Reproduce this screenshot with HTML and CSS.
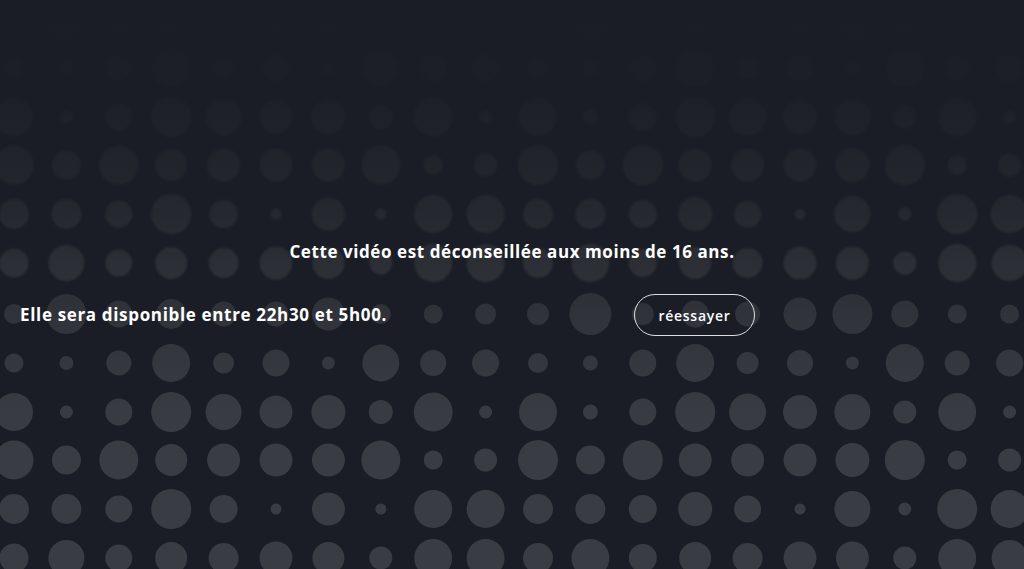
FILE: index.html
```html
<!DOCTYPE html>
<html lang="fr">
<head>
<meta charset="utf-8">
<title>Vidéo déconseillée</title>
<link rel="stylesheet" href="styles.css">
</head>
<body>
<div class="screen">
  <svg class="dots" width="1024" height="569" viewBox="0 0 1024 569" aria-hidden="true">
    <defs>
      <linearGradient id="fade" x1="0" y1="0" x2="0" y2="1">
        <stop offset="0" stop-color="#1a1d25" stop-opacity="1"/>
        <stop offset="0.035" stop-color="#1a1d25" stop-opacity="0.99"/>
        <stop offset="0.121" stop-color="#1a1d25" stop-opacity="0.95"/>
        <stop offset="0.204" stop-color="#1a1d25" stop-opacity="0.88"/>
        <stop offset="0.288" stop-color="#1a1d25" stop-opacity="0.78"/>
        <stop offset="0.374" stop-color="#1a1d25" stop-opacity="0.65"/>
        <stop offset="0.462" stop-color="#1a1d25" stop-opacity="0.46"/>
        <stop offset="0.55" stop-color="#1a1d25" stop-opacity="0.3"/>
        <stop offset="0.636" stop-color="#1a1d25" stop-opacity="0.15"/>
        <stop offset="0.722" stop-color="#1a1d25" stop-opacity="0.04"/>
        <stop offset="0.78" stop-color="#1a1d25" stop-opacity="0"/>
      </linearGradient>
      <filter id="soft" x="-5%" y="-10%" width="110%" height="120%">
        <feGaussianBlur stdDeviation="1.3"/>
      </filter>
      <g id="band">
        <circle cx="14" cy="19" r="10"/><circle cx="66.4" cy="19" r="20"/><circle cx="118.8" cy="19" r="13.5"/><circle cx="171.2" cy="19" r="15"/><circle cx="223.6" cy="19" r="12.5"/><circle cx="276" cy="19" r="12.5"/><circle cx="328.4" cy="19" r="16.5"/><circle cx="380.8" cy="19" r="10"/><circle cx="433.2" cy="19" r="9.5"/><circle cx="485.6" cy="19" r="10.5"/><circle cx="538" cy="19" r="11"/><circle cx="590.4" cy="19" r="21"/><circle cx="642.8" cy="19" r="11"/><circle cx="695.2" cy="19" r="13.5"/><circle cx="747.6" cy="19" r="12.5"/><circle cx="800" cy="19" r="16.5"/><circle cx="852.4" cy="19" r="20"/><circle cx="904.8" cy="19" r="13.5"/><circle cx="957.2" cy="19" r="9.5"/><circle cx="1009.6" cy="19" r="9.5"/>
        <circle cx="14" cy="68" r="9.5"/><circle cx="66.4" cy="68" r="7"/><circle cx="118.8" cy="68" r="12.5"/><circle cx="171.2" cy="68" r="19"/><circle cx="223.6" cy="68" r="10.5"/><circle cx="276" cy="68" r="13.5"/><circle cx="328.4" cy="68" r="6.5"/><circle cx="380.8" cy="68" r="18.5"/><circle cx="433.2" cy="68" r="13"/><circle cx="485.6" cy="68" r="13.5"/><circle cx="538" cy="68" r="10"/><circle cx="590.4" cy="68" r="7.5"/><circle cx="642.8" cy="68" r="13.5"/><circle cx="695.2" cy="68" r="19"/><circle cx="747.6" cy="68" r="11"/><circle cx="800" cy="68" r="13"/><circle cx="852.4" cy="68" r="6.5"/><circle cx="904.8" cy="68" r="19"/><circle cx="957.2" cy="68" r="12.5"/><circle cx="1009.6" cy="68" r="13.5"/>
        <circle cx="14" cy="117" r="19"/><circle cx="66.4" cy="117" r="6.5"/><circle cx="118.8" cy="117" r="13.5"/><circle cx="171.2" cy="117" r="20"/><circle cx="223.6" cy="117" r="18"/><circle cx="276" cy="117" r="16.5"/><circle cx="328.4" cy="117" r="17"/><circle cx="380.8" cy="117" r="12"/><circle cx="433.2" cy="117" r="19.5"/><circle cx="485.6" cy="117" r="6.5"/><circle cx="538" cy="117" r="19"/><circle cx="590.4" cy="117" r="7.5"/><circle cx="642.8" cy="117" r="13.5"/><circle cx="695.2" cy="117" r="20"/><circle cx="747.6" cy="117" r="18.5"/><circle cx="800" cy="117" r="17"/><circle cx="852.4" cy="117" r="18"/><circle cx="904.8" cy="117" r="11.5"/><circle cx="957.2" cy="117" r="19"/><circle cx="1009.6" cy="117" r="6.5"/>
        <circle cx="14" cy="165" r="19.5"/><circle cx="66.4" cy="165" r="14.5"/><circle cx="118.8" cy="165" r="19.5"/><circle cx="171.2" cy="165" r="16"/><circle cx="223.6" cy="165" r="16.5"/><circle cx="276" cy="165" r="16.5"/><circle cx="328.4" cy="165" r="16.5"/><circle cx="380.8" cy="165" r="19.5"/><circle cx="433.2" cy="165" r="9.5"/><circle cx="485.6" cy="165" r="11.5"/><circle cx="538" cy="165" r="20"/><circle cx="590.4" cy="165" r="14.5"/><circle cx="642.8" cy="165" r="20"/><circle cx="695.2" cy="165" r="16.5"/><circle cx="747.6" cy="165" r="16.5"/><circle cx="800" cy="165" r="16.5"/><circle cx="852.4" cy="165" r="17"/><circle cx="904.8" cy="165" r="20"/><circle cx="957.2" cy="165" r="9.5"/><circle cx="1009.6" cy="165" r="11.5"/>
        <circle cx="14" cy="214" r="15"/><circle cx="66.4" cy="214" r="15"/><circle cx="118.8" cy="214" r="13.5"/><circle cx="171.2" cy="214" r="20"/><circle cx="223.6" cy="214" r="14"/><circle cx="276" cy="214" r="5.5"/><circle cx="328.4" cy="214" r="16.5"/><circle cx="380.8" cy="214" r="5.5"/><circle cx="433.2" cy="214" r="19"/><circle cx="485.6" cy="214" r="19"/><circle cx="538" cy="214" r="15"/><circle cx="590.4" cy="214" r="15"/><circle cx="642.8" cy="214" r="14"/><circle cx="695.2" cy="214" r="17"/><circle cx="747.6" cy="214" r="13.5"/><circle cx="800" cy="214" r="5.5"/><circle cx="852.4" cy="214" r="18"/><circle cx="904.8" cy="214" r="6.5"/><circle cx="957.2" cy="214" r="20"/><circle cx="1009.6" cy="214" r="19"/>
        <circle cx="14" cy="263" r="14.5"/><circle cx="66.4" cy="263" r="18"/><circle cx="118.8" cy="263" r="13.5"/><circle cx="171.2" cy="263" r="16"/><circle cx="223.6" cy="263" r="15"/><circle cx="276" cy="263" r="16.5"/><circle cx="328.4" cy="263" r="16"/><circle cx="380.8" cy="263" r="11.5"/><circle cx="433.2" cy="263" r="19"/><circle cx="485.6" cy="263" r="19"/><circle cx="538" cy="263" r="15"/><circle cx="590.4" cy="263" r="19"/><circle cx="642.8" cy="263" r="14"/><circle cx="695.2" cy="263" r="16"/><circle cx="747.6" cy="263" r="15"/><circle cx="800" cy="263" r="16.5"/><circle cx="852.4" cy="263" r="16.5"/><circle cx="904.8" cy="263" r="11.5"/><circle cx="957.2" cy="263" r="19"/><circle cx="1009.6" cy="263" r="18"/>
      </g>
    </defs>
    <use class="band" href="#band" filter="url(#soft)"/>
    <use class="band" href="#band" y="295"/>
    <rect x="0" y="0" width="1024" height="569" fill="url(#fade)"/>
  </svg>
  <div class="content">
    <p class="title">Cette vidéo est déconseillée aux moins de 16 ans.</p>
    <div class="row">
      <p class="avail">Elle sera disponible entre 22h30 et 5h00.</p>
      <button class="retry" type="button">réessayer</button>
    </div>
  </div>
</div>
</body>
</html>
```
FILE: styles.css
```css
html, body {
  margin: 0;
  padding: 0;
  background: #1a1d25;
}

.screen {
  position: relative;
  width: 1024px;
  height: 569px;
  overflow: hidden;
  background: #1a1d25;
  font-family: "Open Sans", "Noto Sans", "Liberation Sans", sans-serif;
  color: #ffffff;
}

.dots {
  position: absolute;
  top: 0;
  left: 0;
  display: block;
}

.band {
  fill: #3a3c43;
}

.content {
  position: relative;
  display: flex;
  flex-direction: column;
  padding-top: 241px;
}

.title {
  margin: 0;
  text-align: center;
  font-size: 17px;
  line-height: 22px;
  font-weight: 700;
  letter-spacing: 0.58px;
}

.row {
  display: flex;
  align-items: center;
  justify-content: space-between;
  margin-top: 31px;
  padding: 0 269px 0 20px;
}

.avail {
  margin: 0;
  font-size: 17px;
  line-height: 22px;
  font-weight: 700;
  letter-spacing: 0.66px;
}

.retry {
  box-sizing: border-box;
  width: 121px;
  height: 42px;
  border: 1.5px solid rgba(255, 255, 255, 0.85);
  border-radius: 21px;
  background: transparent;
  color: #ffffff;
  font-family: "Open Sans", "Noto Sans", "Liberation Sans", sans-serif;
  font-size: 14px;
  font-weight: 600;
  letter-spacing: 0.7px;
  padding: 0;
}
```
